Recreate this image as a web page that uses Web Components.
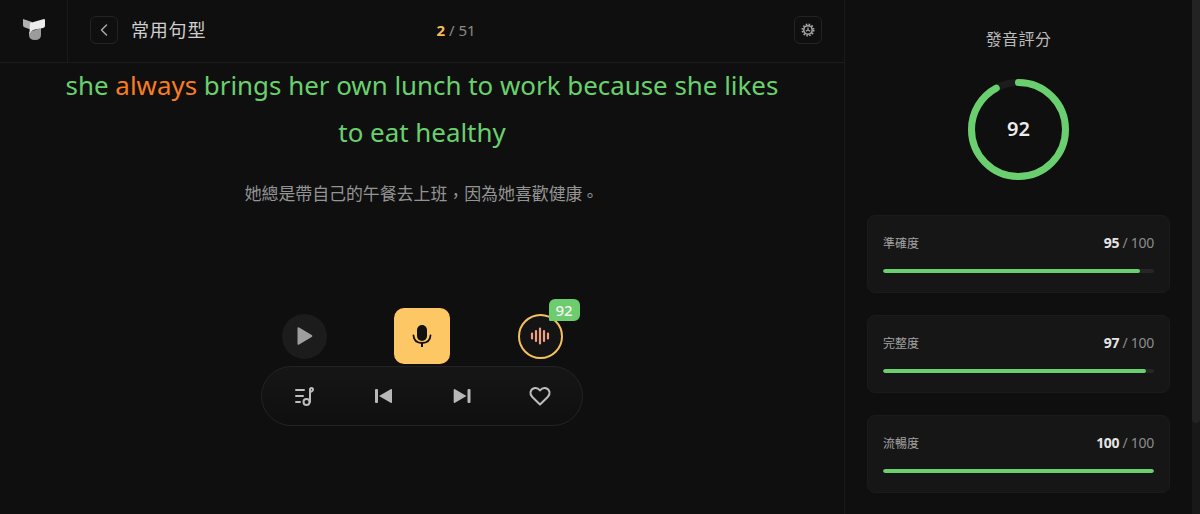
<!DOCTYPE html>
<html lang="zh-TW">
<head>
<meta charset="utf-8">
<title>常用句型</title>
<style>
    html, body { margin: 0; height: 100%; background: #0f0f0f; overflow: hidden; }
    body { font-family: "Noto Sans", "Noto Sans CJK TC", sans-serif; }
</style>
</head>
<body>
<practice-app></practice-app>

<script>
const FONT = `"Noto Sans", "Noto Sans CJK TC", sans-serif`;
const CJK = `"Noto Sans CJK TC", "Noto Sans", sans-serif`;

class TopBar extends HTMLElement {
    constructor() {
        super();
        this.attachShadow({ mode: 'open' }).innerHTML = `
            <style>
                :host { display: flex; height: 62px; border-bottom: 1px solid #1c1c1c; align-items: stretch; flex: none; }
                .logo { width: 67px; border-right: 1px solid #1a1a1a; display: flex; align-items: center; justify-content: center; padding-bottom: 3px; }
                .bar { flex: 1; display: flex; align-items: center; padding: 0 22px 2px 22px; }
                .icon-btn { width: 26px; height: 26px; border: 1px solid #232323; border-radius: 6px; display: flex; align-items: center; justify-content: center; }
                h1 { margin: 0 0 2px 13px; font: 400 18px/26px ${CJK}; letter-spacing: .8px; color: #cfcfcf; }
                .count { flex: 1; text-align: center; font: 400 15px/20px ${FONT}; color: #8a8a8a; padding-right: 88px; margin-bottom: 1px; }
                .count b { color: #f5bd56; font-weight: 700; }
            </style>
            <div class="logo">
                <svg width="22" height="21" viewBox="0 0 22 21">
                    <path d="M0 0 9 3v8L2 8.500Q0 8 0 6Z" fill="#b0b0b0"/>
                    <path d="M6 13 18 9v7q0 5-6 5t-6-5Z" fill="#9c9c9c"/>
                    <path d="M7 4 21 0q1 0 1 1v6q0 1.500-2 2l-8 1.500Q7.500 11.500 6.500 15Z" fill="#ececec"/>
                </svg>
            </div>
            <div class="bar">
                <div class="icon-btn">
                    <svg width="12" height="14" viewBox="0 0 12 14" fill="none" stroke="#a8a8a8" stroke-width="1.500" stroke-linecap="round" stroke-linejoin="round"><path d="M8.500 2 3.500 7l5 5"/></svg>
                </div>
                <h1>常用句型</h1>
                <div class="count"><b>2</b> / 51</div>
                <div class="icon-btn">
                    <svg width="14" height="14" viewBox="0 0 14 14" fill="none" stroke="#a8a8a8">
                        <circle cx="7" cy="7" r="4.200" stroke-width="1.500"/>
                        <circle cx="7" cy="7" r="5.600" stroke-width="1.800" stroke-dasharray="1.500 1.430"/>
                        <path d="M7 7V4.500M7 7 4.800 8.300M7 7l2.200 1.300" stroke-width="1.200"/>
                    </svg>
                </div>
            </div>
        `;
    }
}

class SentenceView extends HTMLElement {
    constructor() {
        super();
        this.attachShadow({ mode: 'open' }).innerHTML = `
            <style>
                :host { display: block; text-align: center; margin-top: -1px; }
                .en { margin: 0 auto; width: 740px; font: 400 25.900px/47px ${FONT}; color: #6ad06e; }
                .zh { margin: 24px 0 0; font: 400 16.900px/26px ${CJK}; color: #949494; }
            </style>
            <p class="en"><slot name="en"></slot></p>
            <p class="zh"><slot name="zh"></slot></p>
        `;
    }
}

class RecordControls extends HTMLElement {
    constructor() {
        super();
        this.attachShadow({ mode: 'open' }).innerHTML = `
            <style>
                :host { display: block; width: 322px; margin: 0 auto; }
                .row { display: flex; align-items: center; justify-content: space-between; padding: 0 20.500px; height: 56px; }
                .play { width: 45px; height: 45px; border-radius: 50%; background: #1c1c1c; display: flex; align-items: center; justify-content: center; }
                .play svg { margin-left: 2px; }
                .mic { width: 56px; height: 56px; border-radius: 10px; background: #fec765; display: flex; align-items: center; justify-content: center; }
                .wave { position: relative; width: 41px; height: 41px; border-radius: 50%; border: 2px solid #f5c15f; background: #141414; display: flex; align-items: center; justify-content: center; }
                .badge { position: absolute; left: 29px; top: -17px; width: 31px; height: 22px; border-radius: 6px 6px 6px 1px; background: #6ccc6e; color: #f4f4f4; font: 500 15px/22px ${FONT}; text-align: center; }
                .pill { box-sizing: border-box; height: 60px; margin-top: 2px; border: 1px solid #232323; border-radius: 30px; background: linear-gradient(#161616, #0f0f0f); display: flex; align-items: center; justify-content: space-between; padding: 0 30px 0 31px; }
                .pill svg { display: block; }
            </style>
            <div class="row">
                <div class="play">
                    <svg width="18" height="20" viewBox="0 0 18 20"><path d="M1.500 2.500q0-1.800 1.600-.9l12.600 7.300q1.600 1.100 0 2.200L3.100 18.400q-1.600.9-1.600-.9Z" fill="#9e9e9e"/></svg>
                </div>
                <div class="mic">
                    <svg width="20" height="24" viewBox="0 0 20 24" fill="none">
                        <rect x="5" y="1" width="10" height="16" rx="5" fill="#111"/>
                        <path d="M1.500 11.500q.5 7.500 8.500 7.500t8.500-7.500" stroke="#111" stroke-width="1.800" stroke-linecap="round"/>
                        <path d="M10 19v4" stroke="#111" stroke-width="2"/>
                    </svg>
                </div>
                <div class="wave">
                    <svg width="20" height="20" viewBox="0 0 20 20" fill="none" stroke="#f0a080" stroke-width="2.200" stroke-linecap="round">
                        <path d="M2 7.500v5M6 5v10M10 2.500v15M14 5v10M18 7.500v5"/>
                    </svg>
                    <div class="badge">92</div>
                </div>
            </div>
            <div class="pill">
                <svg width="24" height="24" viewBox="0 0 24 24" fill="none" stroke="#bdbdbd" stroke-width="2" stroke-linecap="round">
                    <path d="M3 6h8M3 12h7M3 18h4"/>
                    <path d="M17 18V5.500q0-1.500 1.500-1.500 1.500 0 1.500 1.500T18.500 7.500L17 8"/>
                    <circle cx="13.500" cy="18" r="3" stroke-width="2"/>
                </svg>
                <svg width="24" height="24" viewBox="0 0 24 24" fill="#b8b8b8"><rect x="4" y="5" width="3" height="14" rx="1"/><path d="M8 12 19.700 5.300q1.300-.6 1.300.7v12q0 1.300-1.300.7Z"/></svg>
                <svg width="24" height="24" viewBox="0 0 24 24" fill="#b8b8b8"><rect x="17.500" y="5" width="3" height="14" rx="1"/><path d="M16.500 12 5 5.300q-1.300-.6-1.300.7v12q0 1.300 1.300.7Z"/></svg>
                <svg width="24" height="24" viewBox="0 0 24 24" fill="none" stroke="#bdbdbd" stroke-width="2" stroke-linejoin="round"><path d="M12 20.500 4.300 13Q2 10.500 2.500 8 3.300 4.500 7 4q3-.3 5 2.500Q14 3.700 17 4q3.700.5 4.500 4 .5 2.500-1.800 5Z"/></svg>
            </div>
        `;
    }
}

class ScoreRing extends HTMLElement {
    constructor() {
        super();
        const score = Number(this.getAttribute('score'));
        const r = 47;
        const len = 2 * Math.PI * r;
        this.attachShadow({ mode: 'open' }).innerHTML = `
            <style>
                :host { display: block; position: relative; width: 101px; height: 101px; margin: 0 auto; }
                svg { display: block; transform: rotate(-90deg); }
                .val { position: absolute; inset: 0 0 1px; display: flex; align-items: center; justify-content: center; font: 600 20px/1 ${FONT}; color: #ececec; }
            </style>
            <svg width="101" height="101" viewBox="0 0 101 101" fill="none" stroke-width="7">
                <circle cx="50.500" cy="50.500" r="${r}" stroke="#1c1c1c"/>
                <circle cx="50.500" cy="50.500" r="${r}" stroke="#6acf6e" stroke-linecap="round" stroke-dasharray="${len * score / 100} ${len}"/>
            </svg>
            <div class="val">${score}</div>
        `;
    }
}

class ScoreCard extends HTMLElement {
    constructor() {
        super();
        const value = Number(this.getAttribute('value'));
        this.attachShadow({ mode: 'open' }).innerHTML = `
            <style>
                :host { display: block; box-sizing: border-box; height: 78px; padding: 17px 15px 0; background: #161616; border: 1px solid #1b1b1b; border-radius: 8px; }
                .top { display: flex; justify-content: space-between; align-items: center; height: 20px; }
                .label { font: 400 12px/20px ${CJK}; color: #a4a4a4; }
                .num { font: 400 14px/20px ${FONT}; color: #8c8c8c; letter-spacing: -.3px; }
                .num b { color: #e4e4e4; font-weight: 700; }
                .track { margin-top: 16px; height: 4px; border-radius: 2px; background: #262626; overflow: hidden; }
                .fill { height: 100%; border-radius: 2px; background: #6acf6e; width: ${value}%; }
            </style>
            <div class="top">
                <span class="label"><slot></slot></span>
                <span class="num"><b>${value}</b> / 100</span>
            </div>
            <div class="track"><div class="fill"></div></div>
        `;
    }
}

class ScorePanel extends HTMLElement {
    constructor() {
        super();
        this.attachShadow({ mode: 'open' }).innerHTML = `
            <style>
                :host { display: block; position: relative; width: 356px; flex: none; border-left: 1px solid #1a1a1a; box-sizing: border-box; padding: 26px 30px 0 22px; overflow: hidden; }
                h2 { margin: 0 0 29px; font: 400 16px/24px ${CJK}; letter-spacing: .4px; color: #bcbcbc; text-align: center; }
                .cards { display: flex; flex-direction: column; gap: 22px; margin-top: 35px; }
                .scroll { position: absolute; right: 0; top: 0; bottom: 0; width: 8px; background: #181818; }
                .scroll i { display: block; width: 100%; height: 423px; background: #232323; border-radius: 0 0 4px 4px; }
            </style>
            <h2>發音評分</h2>
            <slot name="ring"></slot>
            <div class="cards"><slot></slot></div>
            <div class="scroll"><i></i></div>
        `;
    }
}

class ZhLine extends HTMLElement {
    constructor() {
        super();
        this.attachShadow({ mode: 'open' }).innerHTML = `
            <style>
                :host { display: inline; }
                .comma { display: inline-block; transform: translate(0, 2px); }
                .stop { display: inline-block; transform: translate(-1px, 2px); }
            </style>
            她總是帶自己的午餐去上班<span class="comma">，</span>因為她喜歡健康<span class="stop">。</span>
        `;
    }
}

class PracticeApp extends HTMLElement {
    constructor() {
        super();
        this.attachShadow({ mode: 'open' }).innerHTML = `
            <style>
                :host { display: flex; width: 1200px; height: 514px; background: #0f0f0f; }
                main { width: 844px; flex: none; display: flex; flex-direction: column; }
                record-controls { margin-top: 102px; }
            </style>
            <main>
                <top-bar></top-bar>
                <sentence-view>
                    <span slot="en" lang="en">she <span style="color:#f97c20">always</span> brings her own lunch to work because she likes to eat healthy</span>
                    <zh-line slot="zh"></zh-line>
                </sentence-view>
                <record-controls></record-controls>
            </main>
            <score-panel>
                <score-ring slot="ring" score="92"></score-ring>
                <score-card value="95">準確度</score-card>
                <score-card value="97">完整度</score-card>
                <score-card value="100">流暢度</score-card>
            </score-panel>
        `;
    }
}

customElements.define('top-bar', TopBar);
customElements.define('sentence-view', SentenceView);
customElements.define('record-controls', RecordControls);
customElements.define('score-ring', ScoreRing);
customElements.define('score-card', ScoreCard);
customElements.define('score-panel', ScorePanel);
customElements.define('zh-line', ZhLine);
customElements.define('practice-app', PracticeApp);
</script>
</body>
</html>
